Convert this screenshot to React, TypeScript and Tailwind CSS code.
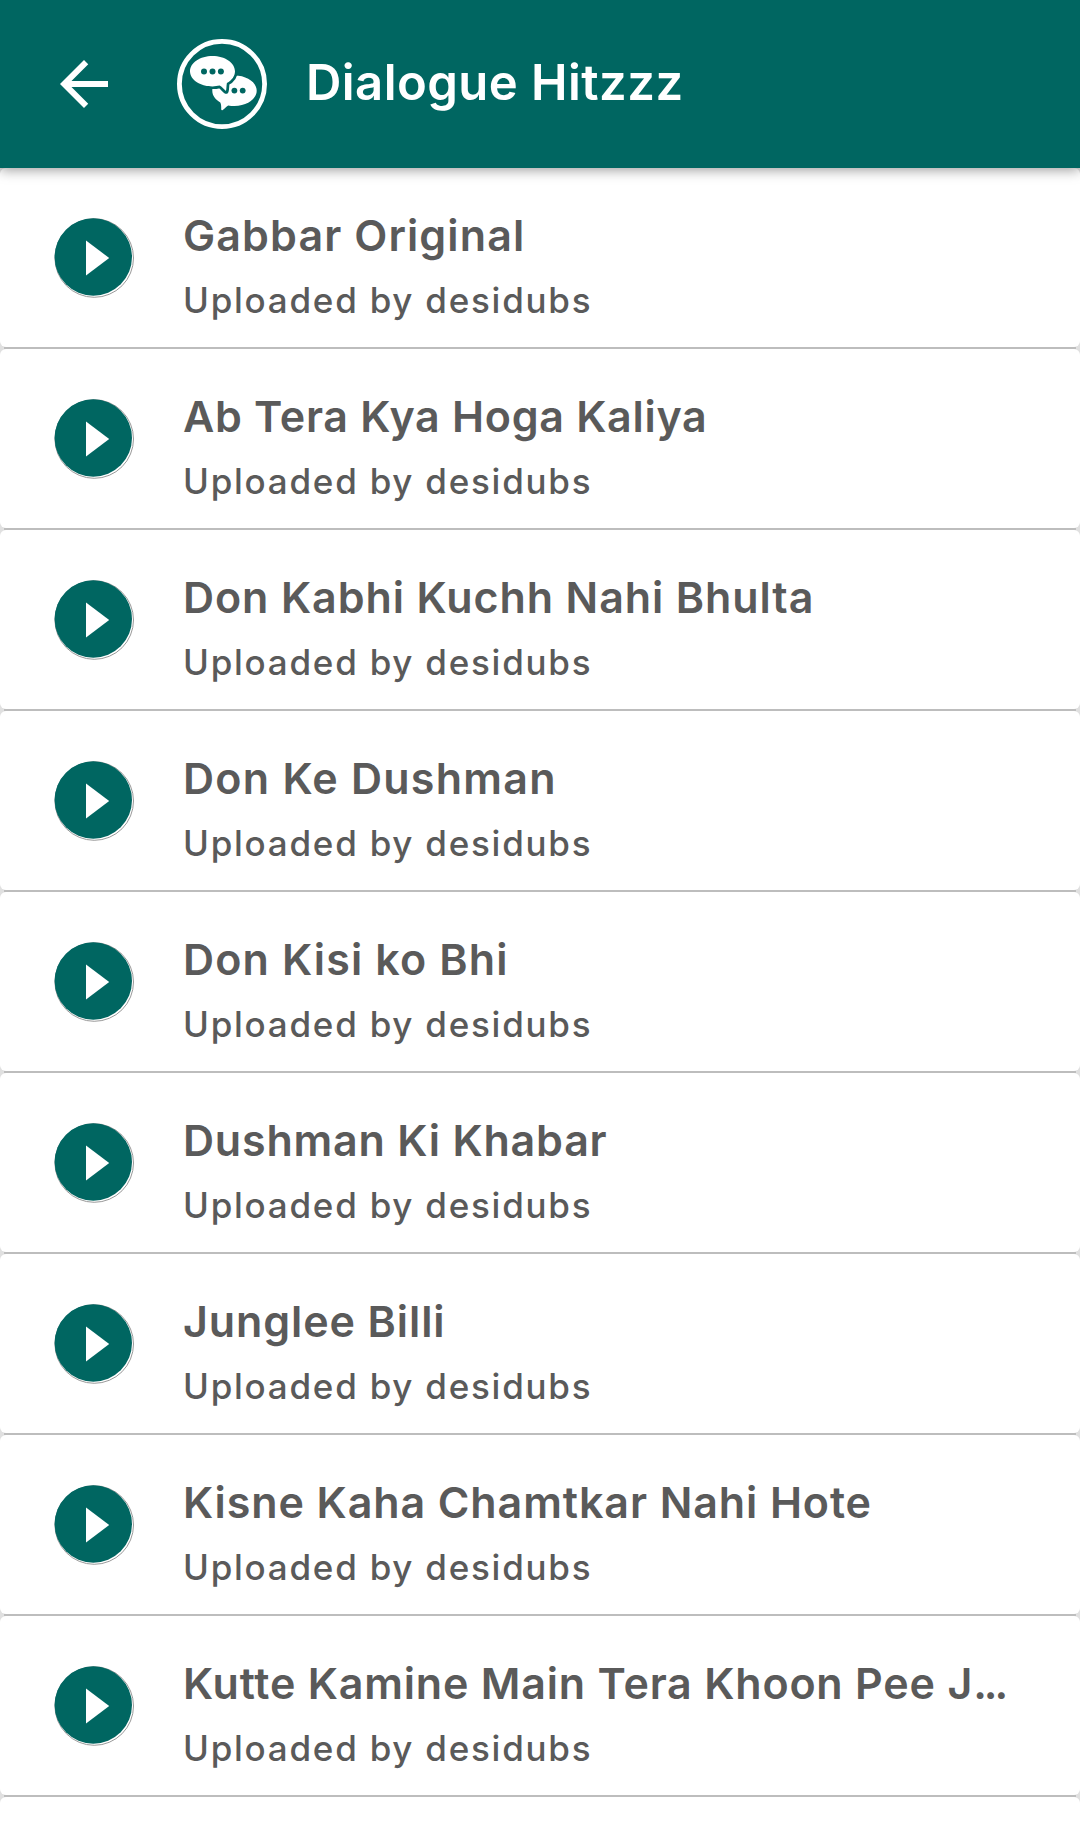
const tracks = [
  { title: "Gabbar Original", spacing: "tracking-[1.1px]" },
  { title: "Ab Tera Kya Hoga Kaliya", spacing: "tracking-[0.7px]" },
  { title: "Don Kabhi Kuchh Nahi Bhulta", spacing: "tracking-[0.9px]" },
  { title: "Don Ke Dushman", spacing: "tracking-[1.25px]" },
  { title: "Don Kisi ko Bhi", spacing: "tracking-[1.15px]" },
  { title: "Dushman Ki Khabar", spacing: "tracking-[0.8px]" },
  { title: "Junglee Billi", spacing: "tracking-[0.9px]" },
  { title: "Kisne Kaha Chamtkar Nahi Hote", spacing: "tracking-[0.9px]" },
  { title: "Kutte Kamine Main Tera Khoon Pee J", clipped: true, spacing: "tracking-[0.8px]" },
];

function BackIcon() {
  return (
    <svg viewBox="0 0 24 24" className="h-[72px] w-[72px] shrink-0 fill-white">
      <path d="M20 11H7.83l5.59-5.59L12 4l-8 8 8 8 1.41-1.41L7.83 13H20z" />
    </svg>
  );
}

function ChatLogo() {
  return (
    <svg viewBox="0 0 90 90" className="ml-[57px] h-[90px] w-[90px] shrink-0">
      <circle cx="45" cy="45" r="42.6" fill="none" stroke="#fff" strokeWidth="4.8" />
      {/* back bubble */}
      <path
        d="M57.5 36.6c12.3 0 22.2 6.8 22.2 15.2S69.8 67 57.5 67c-2.2 0-4.3-.2-6.3-.6-2 1-3.7 3.2-5.5 4.7-.7.5-1.5.2-1.5-.8 0-2.4.2-4.8-.9-6.9-5-2.8-8-6.8-8-11.6 0-8.4 9.9-15.2 22.2-15.2z"
        fill="#fff"
      />
      {/* front bubble */}
      <path
        d="M35.5 17C23.1 17 13 23.8 13 32.2s10.1 15.2 22.5 15.2c2.5 0 4.9-.3 7.1-.8 2.3 1 4.2 3.7 6.4 5.4.6-2.6.4-5.5.9-8 5-2.8 8.1-7 8.1-11.8C58 23.8 47.9 17 35.5 17z"
        fill="#fff"
        stroke="#006661"
        strokeWidth="5.4"
        strokeLinejoin="round"
        paintOrder="stroke"
      />
      <g fill="#006661">
        <circle cx="27" cy="32.6" r="3" />
        <circle cx="35.5" cy="32.6" r="3" />
        <circle cx="43.9" cy="32.6" r="3" />
        <circle cx="57.4" cy="51.6" r="2.9" />
        <circle cx="65.7" cy="51.6" r="2.9" />
      </g>
    </svg>
  );
}

function PlayButton() {
  return (
    <button aria-label="Play" className="mt-[49px] ml-[53px] h-[82px] w-[82px] shrink-0">
      <svg viewBox="0 0 82 82" className="h-full w-full">
        <circle cx="41.2" cy="41" r="39.3" fill="#fff" stroke="#9a9a9a" strokeWidth="1" />
        <circle cx="40.3" cy="40" r="38.7" fill="#006661" />
        <path d="M33 23.5v35L56.2 41z" fill="#fff" />
      </svg>
    </button>
  );
}

type TrackRowProps = { title: string; spacing: string; clipped?: boolean };

function TrackRow({ title, spacing, clipped }: TrackRowProps) {
  return (
    <li>
      <div className="flex h-[179px] rounded-[6px] bg-white">
        <PlayButton />
        <div className="ml-[48px] pt-[40px] whitespace-nowrap text-[#5a5a5a]">
          <h2 className={`text-[43px] leading-[54px] font-semibold ${spacing}`}>
            {title}
            {clipped && <span className="tracking-[-3px]">...</span>}
          </h2>
          <p className="mt-[16px] text-[35px] leading-[44px] font-medium tracking-[1.75px]">
            Uploaded by desidubs
          </p>
        </div>
      </div>
      <div className="mx-[4px] h-[2px] bg-[#bdbdbd]" />
    </li>
  );
}

export default function App() {
  return (
    <div className="h-[1845px] w-[1080px] overflow-hidden bg-white font-['Inter',sans-serif]">
      <header className="relative z-10 flex h-[168px] items-center bg-[#006661] pl-[48px] shadow-[0_2px_12px_rgba(0,0,0,0.4)]">
        <BackIcon />
        <ChatLogo />
        <h1 className="mb-[2px] ml-[39px] text-[49px] leading-[60px] font-semibold tracking-[0.45px] text-white">
          Dialogue Hitzzz
        </h1>
      </header>
      <ul className="bg-[#e0e0e0]">
        {tracks.map((track) => (
          <TrackRow key={track.title} {...track} />
        ))}
        <li className="h-[60px] rounded-t-[6px] bg-white" />
      </ul>
    </div>
  );
}
